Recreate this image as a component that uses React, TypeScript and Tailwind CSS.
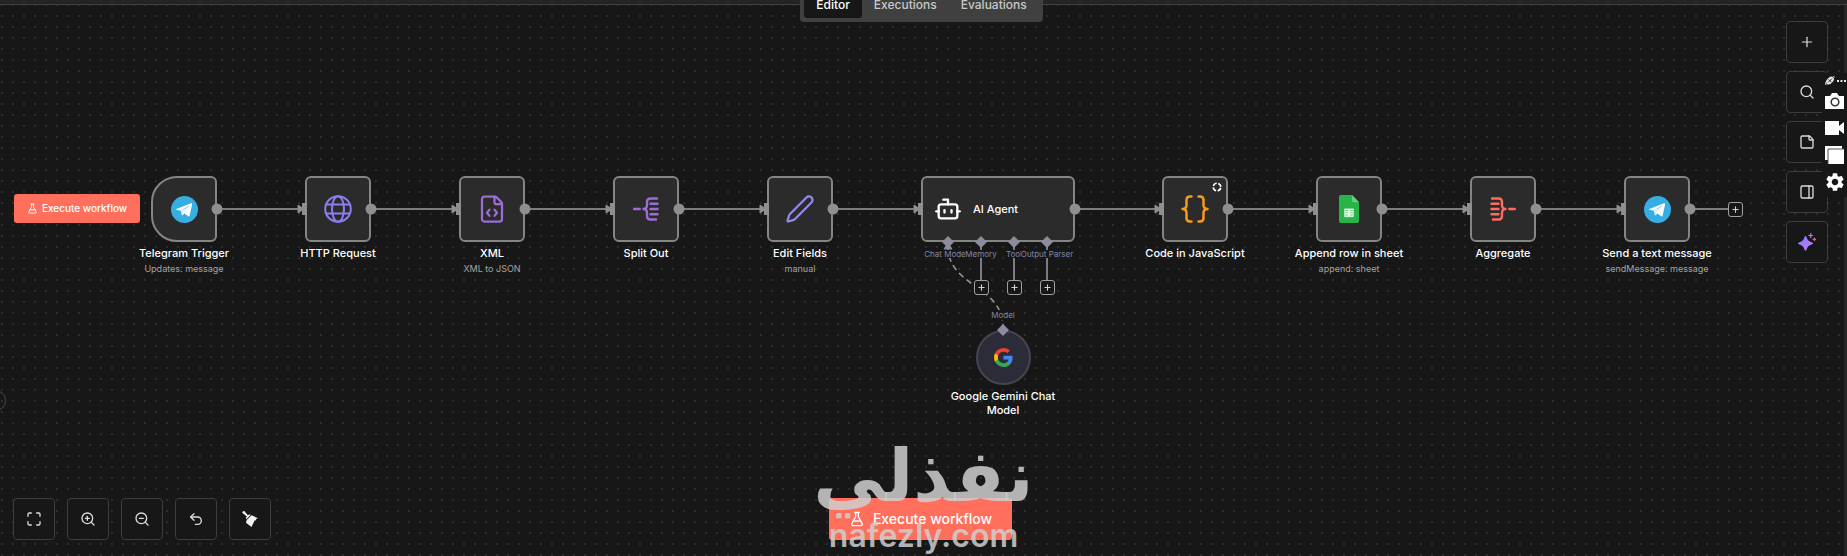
import React from "react";
import {
  Bot,
  FileCode,
  FlaskConical,
  Maximize,
  PanelRight,
  Pen,
  Plus,
  Search,
  StickyNote,
  Undo2,
  ZoomIn,
  ZoomOut,
} from "lucide-react";
import { MdSettings } from "react-icons/md";

interface WorkflowNode {
  id: string;
  x: number;
  title: string;
  subtitle?: string;
  icon: React.ReactNode;
  trigger?: boolean;
  badge?: boolean;
}

const NODE_TOP = 176;
const EDGE_Y = 209;

function TelegramIcon() {
  return (
    <svg viewBox="0 0 26 26" className="w-[27px] h-[27px]">
      <circle cx="13" cy="13" r="13" fill="#37aee2" />
      <path
        d="M5.2 12.6 19.3 7.1c.7-.3 1.2.2 1 1l-2.4 10.8c-.2.8-.7 1-1.3.6l-3.6-2.7-1.8 1.7c-.3.3-.7.2-.8-.3l-.9-3.9-4.2-1.1c-.6-.2-.6-.4-.1-.6Z"
        fill="#fff"
      />
      <path d="m9.600 14.200 7.400-4.700-6 6-.4 2.800" fill="none" stroke="#8fcdea" strokeWidth="0.700" />
    </svg>
  );
}

function GlobeIcon() {
  return (
    <svg
      viewBox="0 0 28 28"
      className="w-[28px] h-[28px]"
      fill="none"
      stroke="#8b7ff0"
      strokeWidth="2"
    >
      <circle cx="14" cy="14" r="12.8" />
      <ellipse cx="14" cy="14" rx="6" ry="12.8" />
      <path d="M2.3 9.5h23.4M2.3 18.5h23.4" />
    </svg>
  );
}

function SplitOutIcon() {
  return (
    <svg
      viewBox="0 0 26 24"
      className="w-[26px] h-[24px]"
      fill="none"
      stroke="#9b6dd5"
      strokeWidth="2.400"
      strokeLinecap="round"
      strokeLinejoin="round"
    >
      <path d="M1.200 12h5.500M24 1.500h-6.500q-3.500 0-3.500 3.500v3q0 4-3.500 4 3.500 0 3.500 4v3q0 3.500 3.500 3.500h5.500M17.500 6.700h7M17.500 12h7M17.500 17.300h7" />
    </svg>
  );
}

function AggregateIcon() {
  return (
    <svg
      viewBox="0 0 26 24"
      className="w-[26px] h-[24px]"
      fill="none"
      stroke="#ff6b5e"
      strokeWidth="2.400"
      strokeLinecap="round"
      strokeLinejoin="round"
    >
      <path d="M24.800 12h-5.500M2 1.500h6.500q3.500 0 3.500 3.500v3q0 4 3.500 4-3.500 0-3.500 4v3q0 3.500-3.500 3.500h-5.500M1.500 6.700h7M1.500 12h7M1.500 17.300h7" />
    </svg>
  );
}

function BracesIcon() {
  return (
    <svg
      viewBox="0 0 28 28"
      className="w-[28px] h-[28px]"
      fill="none"
      stroke="#f59a1f"
      strokeWidth="2.500"
      strokeLinecap="round"
      strokeLinejoin="round"
    >
      <path d="M10.500 1.500H9q-3.500 0-3.500 3.500v5q0 4-4 4 4 0 4 4v5q0 3.500 3.500 3.500h1.500M17.500 1.500H19q3.500 0 3.500 3.500v5q0 4 4 4-4 0-4 4v5q0 3.500-3.500 3.500h-1.500" />
    </svg>
  );
}

function SheetsIcon() {
  return (
    <svg viewBox="0 0 20 28" className="w-[20px] h-[28px]">
      <path
        d="M1.800 0H13l7 7.200V26q0 2-1.800 2H1.800Q0 28 0 26V2q0-2 1.800-2Z"
        fill="#28b446"
      />
      <path d="M13 0l7 7.200h-5.500Q13 7.200 13 5.500Z" fill="#6ace7c" />
      <path
        d="M5 13.200h10v9H5ZM6.200 15.600h3.200M10.700 15.600h3.200M6.200 17.800h3.200M10.700 17.800h3.200M6.200 20h3.200M10.700 20h3.200"
        fill="#fff"
        stroke="#28b446"
        strokeWidth="0.700"
      />
    </svg>
  );
}

function GoogleIcon() {
  return (
    <svg viewBox="1 1 22 22" className="w-[19px] h-[19px]">
      <path
        fill="#4285f4"
        d="M22.560 12.250c0-.780-.070-1.530-.200-2.250H12v4.260h5.920c-.260 1.370-1.040 2.530-2.210 3.310v2.770h3.570c2.080-1.920 3.280-4.740 3.280-8.090z"
      />
      <path
        fill="#34a853"
        d="M12 23c2.970 0 5.460-.980 7.280-2.660l-3.570-2.770c-.980.660-2.230 1.060-3.710 1.060-2.860 0-5.290-1.930-6.160-4.530H2.180v2.840C3.990 20.530 7.700 23 12 23z"
      />
      <path
        fill="#fbbc05"
        d="M5.840 14.090c-.220-.660-.350-1.360-.350-2.090s.130-1.430.350-2.090V7.070H2.180C1.430 8.550 1 10.220 1 12s.430 3.450 1.180 4.930l3.660-2.840z"
      />
      <path
        fill="#ea4335"
        d="M12 5.380c1.620 0 3.060.560 4.210 1.640l3.150-3.150C17.450 2.090 14.970 1 12 1 7.700 1 3.990 3.470 2.180 7.070l3.660 2.840c.870-2.600 3.300-4.530 6.160-4.530z"
      />
    </svg>
  );
}

function BroomIcon() {
  return (
    <svg viewBox="0 0 16 16" className="w-4 h-4" fill="#f0f0f0">
      <path d="M.9.300 2.300 0l3.600 4.300 1.100-.8 1.800.3L4.300 8.300l-.5-1.600 1-1.100L.2 1.800Z" />
      <path d="M9.600 4.300 16 7.200l-2 .7.200 1.300-1.600.4L9.500 16 4 11.700 4.700 9Z" />
    </svg>
  );
}

function SparkIcon() {
  return (
    <svg viewBox="0 0 18 18" className="w-[18px] h-[18px]">
      <defs>
        <linearGradient id="spark" x1="0" y1="0" x2="1" y2="1">
          <stop offset="0.300" stopColor="#8f7bff" />
          <stop offset="0.700" stopColor="#b57bf0" />
          <stop offset="1" stopColor="#f0657a" />
        </linearGradient>
      </defs>
      <path
        d="M7.500 3q.8 0 1.100 1.200 1 3.800 5 5 1.400.3 1.400 1.100t-1.400 1.100q-4 1.200-5 5-.3 1.200-1.100 1.200t-1.100-1.200q-1-3.800-5-5Q0 11.100 0 10.300t1.400-1.100q4-1.200 5-5Q6.700 3 7.500 3Z"
        fill="url(#spark)"
      />
      <path d="M12.700 0v5M10.200 2.500h5" stroke="#b07be8" strokeWidth="1.200" />
      <path d="M16.400 4.500v3.600M14.600 6.300h3.600" stroke="#d0658f" strokeWidth="1.200" />
    </svg>
  );
}

const nodes: WorkflowNode[] = [
  {
    id: "telegram",
    x: 151,
    title: "Telegram Trigger",
    subtitle: "Updates: message",
    icon: <TelegramIcon />,
    trigger: true,
  },
  { id: "http", x: 305, title: "HTTP Request", icon: <GlobeIcon /> },
  {
    id: "xml",
    x: 459,
    title: "XML",
    subtitle: "XML to JSON",
    icon: <FileCode className="w-[30px] h-[30px] text-[#9b6dd5]" strokeWidth={1.8} />,
  },
  { id: "split", x: 613, title: "Split Out", icon: <SplitOutIcon /> },
  {
    id: "edit",
    x: 767,
    title: "Edit Fields",
    subtitle: "manual",
    icon: <Pen className="w-[30px] h-[30px] text-[#8e8bee]" strokeWidth={1.8} />,
  },
  {
    id: "code",
    x: 1162,
    title: "Code in JavaScript",
    icon: <BracesIcon />,
    badge: true,
  },
  {
    id: "sheet",
    x: 1316,
    title: "Append row in sheet",
    subtitle: "append: sheet",
    icon: <SheetsIcon />,
  },
  { id: "aggregate", x: 1470, title: "Aggregate", icon: <AggregateIcon /> },
  {
    id: "send",
    x: 1624,
    title: "Send a text message",
    subtitle: "sendMessage: message",
    icon: <TelegramIcon />,
  },
];

// start and end x of every main connection
const edges = [
  [217, 305],
  [371, 459],
  [525, 613],
  [679, 767],
  [833, 921],
  [1075, 1162],
  [1228, 1316],
  [1382, 1470],
  [1536, 1624],
];

const agentInputs = [
  { label: "Chat Model*", x: 948 },
  { label: "Memory", x: 981 },
  { label: "Tool", x: 1014 },
  { label: "Output Parser", x: 1047 },
];

function Edges() {
  return (
    <svg className="absolute inset-0 w-full h-full" fill="none">
      {edges.map(([from, to]) => (
        <path
          key={from}
          d={`M${from} ${EDGE_Y}H${to - 4}`}
          stroke="#7d7d7d"
          strokeWidth="2"
        />
      ))}
      <path d={`M1690 ${EDGE_Y}H1728`} stroke="#7d7d7d" strokeWidth="2" />
      {agentInputs.slice(1).map((input) => (
        <path
          key={input.label}
          d={`M${input.x} 242V280`}
          stroke="#7c7a8c"
          strokeWidth="2"
        />
      ))}
      <path
        d="M948 246C948 288 1003 284 1003 328"
        stroke="#9a99a3"
        strokeWidth="1.500"
        strokeDasharray="6 4"
      />
    </svg>
  );
}

function Handles() {
  return (
    <svg
      className="absolute inset-0 w-full h-full pointer-events-none"
      fill="#8f8f8f"
    >
      {edges.map(([from, to]) => (
        <g key={from}>
          <circle cx={from} cy={EDGE_Y} r="5.500" />
          <path d={`M${to - 7} ${EDGE_Y - 4}l6 4-6 4Z`} stroke="#8f8f8f" />
          <rect x={to - 3} y={EDGE_Y - 6} width="5" height="12" />
        </g>
      ))}
      <circle cx="1690" cy={EDGE_Y} r="5.500" />
      {agentInputs.map((input) => (
        <path
          key={input.label}
          d={`M${input.x} 236l6 6-6 6-6-6Z`}
          fill="#8d8b9e"
        />
      ))}
      <path d="M948 243l4 6h-8Z" fill="#8d8b9e" stroke="#8d8b9e" />
      <path d="M1003 324l6 6-6 6-6-6Z" fill="#8d8b9e" />
    </svg>
  );
}

function NodeCard({ node }: { node: WorkflowNode }) {
  return (
    <div
      className="absolute flex flex-col items-center w-[66px]"
      style={{ left: node.x, top: NODE_TOP }}
    >
      <div
        className={`relative flex items-center justify-center w-[66px] h-[66px] bg-[#2b2b2b] border-2 border-[#858585] ${
          node.trigger ? "rounded-l-[26px] rounded-r-md" : "rounded-md"
        }`}
      >
        {node.icon}
        {node.badge && (
          <svg
            viewBox="0 0 10 10"
            className="absolute top-1 right-1 w-[10px] h-[10px]"
            fill="none"
            stroke="#fff"
            strokeWidth="1.600"
          >
            <circle
              cx="5"
              cy="5"
              r="3.800"
              strokeDasharray="4.400 1.569"
              strokeDashoffset="-0.800"
            />
          </svg>
        )}
      </div>
      <div className="mt-1 text-[11px] leading-[15px] font-medium text-white whitespace-nowrap">
        {node.title}
      </div>
      {node.subtitle && (
        <div className="text-[9px] leading-4 text-[#a3a3a3] whitespace-nowrap">
          {node.subtitle}
        </div>
      )}
    </div>
  );
}

function AddHandle({ x, y }: { x: number; y: number }) {
  return (
    <button
      aria-label="Add node"
      className="absolute flex items-center justify-center w-[15px] h-[15px] rounded-[3px] border border-[#a0a0a0] bg-[#171717] text-[#d0d0d0]"
      style={{ left: x, top: y }}
    >
      <Plus className="w-[9px] h-[9px] shrink-0" strokeWidth={3} />
    </button>
  );
}

function ToolButton({
  label,
  children,
}: {
  label: string;
  children: React.ReactNode;
}) {
  return (
    <button
      aria-label={label}
      className="flex items-center justify-center w-[42px] h-[42px] rounded border border-[#3d3d3d] bg-[#171717] text-[#dcdcdc]"
    >
      {children}
    </button>
  );
}

function CaptureDock() {
  return (
    <div className="absolute right-0 top-[73px] w-[25px] pl-[3px] pt-[2px] pb-1 flex flex-col gap-[7px] bg-[#171717] text-white">
      <svg viewBox="0 0 22 11" className="w-[22px] h-[11px]" fill="#e8e8e8">
        <ellipse cx="5" cy="5.500" rx="4.500" ry="3" transform="rotate(-45 5 5.500)" />
        <path d="m3 7.500 4-4M3.500 4.500l3 2.500" stroke="#171717" strokeWidth="0.900" />
        <path d="M1 10q-1.200-2.500.8-4M8.500 1l.8 1.500" stroke="#e8e8e8" fill="none" />
        <path d="M12 5h2v2h-2zM15.500 5h2v2h-2zM19 5h2v2h-2z" />
      </svg>
      <svg viewBox="0 0 19 16" className="w-[19px] h-4" fill="#fff">
        <path d="M0 3h5l2-3h5l2 3h5v13H0Z" />
        <circle cx="10" cy="9" r="3.800" stroke="#333" strokeWidth="1.500" />
      </svg>
      <svg viewBox="0 0 19 14" className="w-[19px] h-[14px] mt-[5px]" fill="#fff">
        <path d="M0 0h14v5l5-4v12l-5-4v5H0Z" />
      </svg>
      <svg viewBox="0 0 19 18" className="w-[19px] h-[18px] mt-1" fill="#fff">
        <path d="M0 0h17v14H0Z" />
        <path d="M3 3h17v16H3Z" stroke="#555" />
      </svg>
      <MdSettings className="w-[22px] h-[22px] -ml-px" />
    </div>
  );
}

const tabs = ["Editor", "Executions", "Evaluations"];

export default function App() {
  return (
    <div className="relative flex flex-col min-h-screen overflow-hidden bg-[#171717] font-[Inter,sans-serif] text-white">
      <header className="relative z-10 flex justify-center h-[5px] pr-1 bg-[#242424] border-b border-[#404040]">
        <nav className="absolute -top-2 flex h-[30px] p-1 pt-0 rounded bg-[#404040] text-xs font-medium text-[#c8c8c8]">
          {tabs.map((tab, i) => (
            <button
              key={tab}
              className={`px-3 rounded-[3px] ${
                i === 0 ? "bg-[#171717] text-white" : ""
              }`}
            >
              {tab}
            </button>
          ))}
        </nav>
      </header>

      <main className="absolute inset-0 bg-[radial-gradient(circle_at_2px_5px,#3c3c3c_0.5px,transparent_1px)] bg-size-[11px_11px]">
        <Edges />

        <button className="absolute left-[14px] top-[194px] flex items-center justify-center gap-1 w-[126px] h-[29px] rounded-[3px] bg-[#ff6f5c] text-[10px] font-medium">
          <FlaskConical className="w-[11px] h-[11px]" />
          Execute workflow
        </button>

        {nodes.map((node) => (
          <NodeCard key={node.id} node={node} />
        ))}

        <div className="absolute left-[921px] top-[176px] flex items-center gap-[11px] w-[154px] h-[66px] pl-[11px] rounded-md border-2 border-[#858585] bg-[#2b2b2b]">
          <Bot className="w-7 h-7" />
          <span className="text-[11px] font-medium">AI Agent</span>
        </div>

        {agentInputs.map((input) => (
          <div
            key={input.label}
            className="absolute top-[250px] -translate-x-1/2 bg-[#171717] text-[8px] leading-2 text-[#8886a0] whitespace-nowrap"
            style={{ left: input.x }}
          >
            {input.label}
          </div>
        ))}
        {agentInputs.slice(1).map((input) => (
          <AddHandle key={input.label} x={input.x - 7} y={280} />
        ))}
        <AddHandle x={1728} y={202} />

        <div className="absolute left-[943px] top-[310px] flex flex-col items-center w-[120px]">
          <div className="bg-[#171717] text-[8px] leading-[10px] text-[#8886a0]">
            Model
          </div>
          <div className="mt-[10px] flex items-center justify-center w-[55px] h-[55px] rounded-full border-2 border-[#46454f] bg-[#2c2b38]">
            <GoogleIcon />
          </div>
          <div className="mt-1 text-[11px] leading-[14px] font-medium text-center">
            Google Gemini Chat Model
          </div>
        </div>
        <Handles />

        <div className="absolute -left-[15px] top-[390px] w-[21px] h-[21px] rounded-full border border-[#4a4a4a]" />
      </main>

      <aside className="relative flex flex-col gap-2 self-end mt-4 mr-[19px]">
        <ToolButton label="Add node">
          <Plus className="w-4 h-4" strokeWidth={1.8} />
        </ToolButton>
        <ToolButton label="Search">
          <Search className="w-4 h-4" />
        </ToolButton>
        <ToolButton label="Add note">
          <StickyNote className="w-4 h-4" />
        </ToolButton>
        <ToolButton label="Toggle panel">
          <PanelRight className="w-4 h-4" />
        </ToolButton>
        <ToolButton label="Assistant">
          <SparkIcon />
        </ToolButton>
      </aside>

      <footer className="relative mt-auto grid grid-cols-[1fr_auto_1fr] items-center px-[13px] pb-4 mr-[6px]">
        <div className="flex gap-3">
          <ToolButton label="Fit view">
            <Maximize className="w-4 h-4" />
          </ToolButton>
          <ToolButton label="Zoom in">
            <ZoomIn className="w-4 h-4" />
          </ToolButton>
          <ToolButton label="Zoom out">
            <ZoomOut className="w-4 h-4" />
          </ToolButton>
          <ToolButton label="Undo">
            <Undo2 className="w-4 h-4" />
          </ToolButton>
          <ToolButton label="Tidy up">
            <BroomIcon />
          </ToolButton>
        </div>
        <button className="flex items-center justify-center gap-2 w-[183px] h-[42px] rounded-[3px] bg-[#ff6f5c] text-sm font-medium">
          <FlaskConical className="w-4 h-4" />
          Execute workflow
        </button>
      </footer>

      <div className="absolute right-0 inset-y-0 w-[3px] bg-[#242424]" />
      <CaptureDock />

      <div className="absolute inset-x-0 bottom-0 flex flex-col items-center text-[#cfcfcf]/85 pointer-events-none">
        <div
          dir="rtl"
          className="mb-1 font-['DejaVu_Sans',sans-serif] text-[72px] leading-[72px] font-bold"
        >
          نفذلي
        </div>
        <div className="text-[32px] leading-[40px] font-semibold">
          nafezly.com
        </div>
      </div>
    </div>
  );
}
